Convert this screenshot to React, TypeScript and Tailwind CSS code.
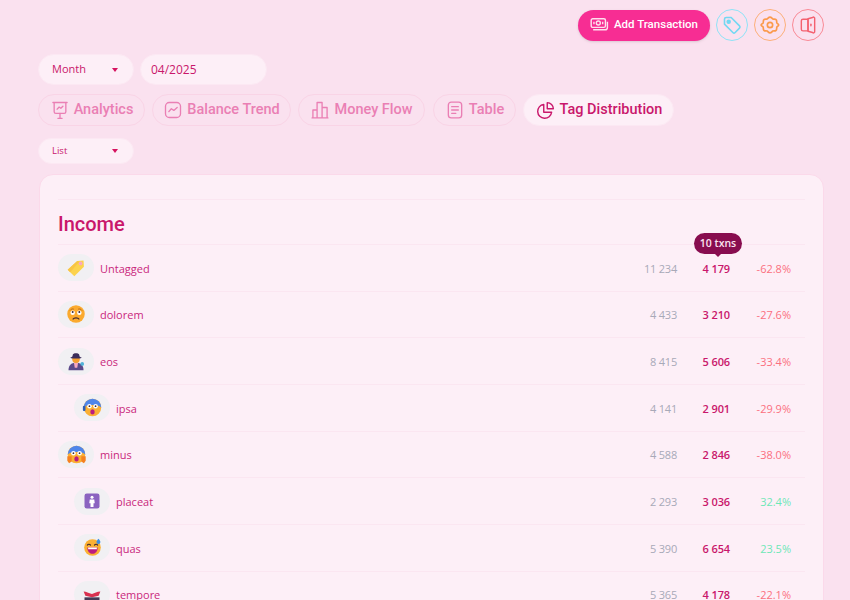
import type { ReactNode } from 'react'

const FONT = "font-['Open_Sans','Noto_Sans',sans-serif]"
const HEAD = "font-['Roboto','Open_Sans',sans-serif]"

function TabIcon({ children, className = 'w-[20px] h-[20px]' }: { children: ReactNode; className?: string }) {
  return (
    <svg viewBox="0 0 24 24" fill="none" stroke="currentColor" strokeWidth="1.6" strokeLinecap="round" strokeLinejoin="round" className={className}>
      {children}
    </svg>
  )
}

const TABS = [
  {
    label: 'Analytics', w: 'w-[107px]', mr: 'mr-[7px]',
    icon: <><path d="M3.500 3h17M5 3v11a2 2 0 0 0 2 2h10a2 2 0 0 0 2-2V3" /><path d="M12 16v5M9.500 22h5" /><path d="m8.500 11 2.500-2.500 2 1.500 2.500-2.500" /></>,
  },
  {
    label: 'Balance Trend', w: 'w-[139px]', mr: 'mr-[7px]',
    icon: <><rect x="3" y="3" width="18" height="18" rx="4.500" /><path d="m7 14 3-3.500 3 2L17 9" /></>,
  },
  {
    label: 'Money Flow', w: 'w-[127px]', mr: 'mr-[8px]',
    icon: <><path d="M2.500 21.500h19M3.500 21.500V12h5v9.500M8.500 21.500V3h6v18.500M14.500 21.500V9h6v12.500" /></>,
  },
  {
    label: 'Table', w: 'w-[83px]', mr: 'mr-[7px]',
    icon: <><rect x="4" y="2.500" width="16" height="19" rx="3.500" /><path d="M8 8h8M8 12h8M8 16h5" /></>,
  },
]

function Faces({ kind }: { kind: string }) {
  if (kind === 'tag')
    return (
      <svg viewBox="0 0 24 24" className="w-[20px] h-[20px]">
        <path d="M2 14 13.500 3.500l7.500-.5.500 7.500L10 22z" fill="#fcd34d" />
        <path d="M2 14 13.500 3.500l2.500 1L5 17z" fill="#f8c544" />
        <circle cx="17.500" cy="6.500" r="2.200" fill="#f9a8c4" />
      </svg>
    )
  if (kind === 'placeat')
    return (
      <svg viewBox="0 0 24 24" className="w-[18px] h-[18px]">
        <rect x="2" y="2" width="20" height="20" rx="3" fill="#8b63c0" />
        <circle cx="12" cy="7" r="2" fill="#fff" />
        <path d="M9 10h6l.7 5H14v5h-4v-5H8.300z" fill="#fff" />
      </svg>
    )
  if (kind === 'eos')
    return (
      <svg viewBox="0 0 24 24" className="w-[20px] h-[20px]">
        <path d="M3 23c0-6 3-9 9-9s9 3 9 9z" fill="#5b4a8a" />
        <path d="M9.500 14h5l-1 6h-3z" fill="#f7a8c0" />
        <circle cx="12" cy="10" r="4.500" fill="#f59e2e" />
        <path d="M5 8c2-1 3-1 3-3 0-3 8-3 8 0 0 2 1 2 3 3-3 1.500-11 1.500-14 0z" fill="#3b2d5a" />
        <circle cx="19.500" cy="15.500" r="2.200" fill="#4fb3d9" />
      </svg>
    )
  if (kind === 'tempore')
    return (
      <svg viewBox="0 0 24 24" className="w-[20px] h-[20px]">
        <path d="M2 9c3 0 6 2 10 3 3-1 6-3 10-3l-2 5-8 2-8-2z" fill="#d9304f" />
        <path d="M3 16h18v7H3z" fill="#453a55" />
      </svg>
    )
  const isIpsa = kind === 'ipsa'
  const isMinus = kind === 'minus'
  if (isIpsa || isMinus)
    return (
      <svg viewBox="0 0 24 24" className="w-[21px] h-[21px]">
        <circle cx="12" cy="12" r="10" fill="#fbb034" />
        <path d="M2 12a10 10 0 0 1 20 0c-2-2-4-3-10-3S4 10 2 12z" fill="#4f86ea" />
        <circle cx="8.500" cy="10.500" r="2.600" fill="#fff" />
        <circle cx="15.500" cy="10.500" r="2.600" fill="#fff" />
        <circle cx="8.500" cy="10.500" r="1" fill="#402a32" />
        <circle cx="15.500" cy="10.500" r="1" fill="#402a32" />
        <ellipse cx="12" cy="17" rx="2.500" ry="3" fill="#bb1d80" />
        {isMinus && <path d="M1.500 14h5v6l-3 2-2-3zM22.500 14h-5v6l3 2 2-3z" fill="#f5811f" />}
        {isIpsa && <rect x="1" y="10" width="3" height="6" rx="1.200" fill="#2f5fb5" />}
      </svg>
    )
  if (kind === 'quas')
    return (
      <svg viewBox="0 0 24 24" className="w-[19px] h-[19px]">
        <circle cx="12" cy="12" r="10.500" fill="#fbb034" />
        <path d="M5.500 12h13c0 5-3 8-6.500 8S5.500 17 5.500 12z" fill="#bb1d80" />
        <path d="M6.500 12h11v2.200h-11z" fill="#fff" />
        <path d="M5.500 9c1-1.500 3-1.500 4 0M14.500 9c1-1.500 3-1.500 4 0" stroke="#402a32" strokeWidth="1.500" fill="none" strokeLinecap="round" />
        <path d="M19.500 1c1.800 2 2.500 3 2.500 4.200a2.500 2.500 0 0 1-5 0C17 4 17.700 3 19.500 1z" fill="#3f8ee0" />
      </svg>
    )
  return (
    <svg viewBox="0 0 24 24" className="w-[20px] h-[20px]">
      <circle cx="12" cy="12" r="10.500" fill="#fbaa2e" />
      <circle cx="8" cy="10.500" r="2.700" fill="#fff" />
      <circle cx="16" cy="10.500" r="2.700" fill="#fff" />
      <circle cx="8" cy="9.500" r="1.200" fill="#402a32" />
      <circle cx="16" cy="9.500" r="1.200" fill="#402a32" />
      <path d="M8.500 18c1-2 6-2 7 0" stroke="#402a32" strokeWidth="1.500" fill="none" strokeLinecap="round" />
      <path d="M5 7.500c1-1.500 3-2 4-1.500M19 7.500c-1-1.500-3-2-4-1.500" stroke="#b0691b" strokeWidth="1.100" fill="none" strokeLinecap="round" />
    </svg>
  )
}

const ROWS = [
  { name: 'Untagged', icon: 'tag', prev: '11 234', cur: '4 179', pct: '-62.8%', indent: false, tip: true },
  { name: 'dolorem', icon: 'dolorem', prev: '4 433', cur: '3 210', pct: '-27.6%', indent: false },
  { name: 'eos', icon: 'eos', prev: '8 415', cur: '5 606', pct: '-33.4%', indent: false },
  { name: 'ipsa', icon: 'ipsa', prev: '4 141', cur: '2 901', pct: '-29.9%', indent: true },
  { name: 'minus', icon: 'minus', prev: '4 588', cur: '2 846', pct: '-38.0%', indent: false },
  { name: 'placeat', icon: 'placeat', prev: '2 293', cur: '3 036', pct: '32.4%', indent: true },
  { name: 'quas', icon: 'quas', prev: '5 390', cur: '6 654', pct: '23.5%', indent: true },
  { name: 'tempore', icon: 'tempore', prev: '5 365', cur: '4 178', pct: '-22.1%', indent: true },
]

function Caret() {
  return <span className="w-0 h-0 border-x-[3px] border-x-transparent border-t-[4px] border-t-[#d6125f]" />
}

function Select({ label, className, text }: { label: string; className: string; text: string }) {
  return (
    <div className={`w-[96px] flex items-center justify-between pl-[13px] pr-[15px] rounded-full bg-[#fdeff7] border border-[#fce8f3] text-[#c9176b] ${text} ${className}`}>
      {label}
      <Caret />
    </div>
  )
}

export default function App() {
  return (
    <div className={`${FONT} h-[600px] overflow-hidden bg-[#fae1ef] pl-[38px] pr-[26px]`}>
      <div className="flex justify-end items-center gap-[6px] pt-[9px]">
        <button className={`${HEAD} w-[132px] h-[31px] flex items-center justify-center gap-[5px] rounded-full bg-[#f72d93] text-white text-[11.5px] font-medium shadow-sm`}>
          <svg viewBox="0 0 24 20" fill="none" stroke="#fde0ee" strokeWidth="1.800" className="w-[19px] h-[16px]">
            <rect x="1.500" y="2" width="18" height="11" rx="2" />
            <circle cx="10.500" cy="7.500" r="2.500" />
            <path d="M5 6v3M16 6v3M4 16h15a3 3 0 0 0 3-3V6" />
          </svg>
          Add Transaction
        </button>
        <div className="w-[32px] h-[32px] flex items-center justify-center rounded-full border-[1.5px] border-[#8fe3f7] text-[#73d8f2]">
          <svg viewBox="0 0 24 24" fill="none" stroke="currentColor" strokeWidth="1.900" strokeLinejoin="round" className="w-[20px] h-[20px]">
            <path d="M3 5a2 2 0 0 1 2-2h6l10 10a2 2 0 0 1 0 2.800L15.800 21a2 2 0 0 1-2.800 0L3 11z" />
            <circle cx="8" cy="8" r="1.800" fill="currentColor" />
          </svg>
        </div>
        <div className="w-[32px] h-[32px] flex items-center justify-center rounded-full border-[1.5px] border-[#fdb07a] text-[#fb9a4b]">
          <svg viewBox="0 0 24 24" fill="none" stroke="currentColor" strokeWidth="2" strokeLinejoin="round" className="w-[20px] h-[20px]">
            <path d="M12 2.500c1.800 0 2.300 1.700 3.400 2.200 1.200.5 2.800-.3 3.900.9 1.200 1.200.4 2.700.9 3.900.5 1.100 2.200 1 2.200 2.500s-1.700 1.400-2.200 2.500c-.5 1.200.3 2.700-.9 3.900-1.100 1.200-2.700.4-3.900.9-1.100.5-1.600 2.200-3.400 2.200s-2.300-1.700-3.400-2.200c-1.200-.5-2.800.3-3.900-.9-1.200-1.200-.4-2.700-.9-3.900C3.300 13.400 1.300 13.500 1.300 12s2-1.400 2.500-2.500c.5-1.200-.3-2.700.9-3.900 1.100-1.200 2.700-.4 3.900-.9C9.700 4.200 10.200 2.500 12 2.500z" />
            <circle cx="12" cy="12" r="3.200" />
          </svg>
        </div>
        <div className="w-[32px] h-[32px] flex items-center justify-center rounded-full border-[1.5px] border-[#f98a96] text-[#f4606f]">
          <svg viewBox="0 0 24 24" fill="none" stroke="currentColor" strokeWidth="1.700" strokeLinejoin="round" strokeLinecap="round" className="w-[20px] h-[20px]">
            <path d="M12 5H6a2 2 0 0 0-2 2v10a2 2 0 0 0 2 2h6z" />
            <path d="M12 4.500 17.500 3A1.500 1.500 0 0 1 20 4.500v15a1.500 1.500 0 0 1-2.500 1.500L12 19.500z" />
            <path d="M15.500 11v2" />
          </svg>
        </div>
      </div>

      <div className="flex gap-[6px] mt-[13px]">
        <Select label="Month" className="h-[31px]" text="text-[11px]" />
        <div className="w-[127px] h-[31px] flex items-center pl-[10px] rounded-full bg-[#fdeff7] border border-[#fce8f3] text-[#c9176b] text-[12px]">04/2025</div>
      </div>

      <div className={`${HEAD} flex mt-[9px] text-[14.5px] font-medium`}>
        {TABS.map((t) => (
          <div key={t.label} className={`${t.w} ${t.mr} h-[32px] flex items-center justify-center gap-[4px] rounded-full border border-[#f9d4e6] text-[#ea7fb4]`}>
            <TabIcon>{t.icon}</TabIcon>
            {t.label}
          </div>
        ))}
        <div className="w-[151px] h-[32px] flex items-center justify-center gap-[4px] rounded-full bg-[#fdeff7] border border-[#fce8f3] text-[#c9176b]">
          <TabIcon className="w-[21px] h-[21px]">
            <path d="M10 5a8 8 0 1 0 9 9h-9z" />
            <path d="M14 3a7 7 0 0 1 7 7h-7z" />
          </TabIcon>
          Tag Distribution
        </div>
      </div>

      <Select label="List" className="h-[26px] mt-[12px]" text="text-[9.5px]" />

      <div className="mt-[10px] ml-[1px] w-[785px] h-[500px] rounded-[14px] bg-[#fdeff7] border border-[#fbd9ea] px-[18px] pt-[24px]">
        <div className="border-t border-[#fbe6f1] h-[45px] flex items-center">
          <h2 className={`${HEAD} mt-[4px] text-[20px] leading-none font-medium text-[#c9176b]`}>Income</h2>
        </div>
        {ROWS.map((r) => (
          <div key={r.name} className={`relative h-[46.67px] flex items-center border-t border-[#fbe6f1] text-[11px] ${r.indent ? 'pl-[16px]' : ''}`}>
            <div className="w-[36px] h-[27px] flex items-center justify-center rounded-full bg-[#f1f0f3]">
              <Faces kind={r.icon} />
            </div>
            <span className="ml-[6px] mt-[2px] text-[#c9287c]">{r.name}</span>
            <span className="absolute right-[128px] mt-[2px] tracking-[-0.02em] text-[#a8a9b8]">{r.prev}</span>
            <span className="absolute right-[75px] mt-[2px] font-semibold tracking-[-0.01em] text-[#c9176b]">{r.cur}</span>
            <span className={`absolute right-[14px] mt-[2px] ${r.pct.startsWith('-') ? 'text-[#fb6f80]' : 'text-[#6ee7b7]'}`}>{r.pct}</span>
            {r.tip && (
              <div className="absolute right-[63px] top-[-12px] h-[21px] w-[48px] flex items-center justify-center rounded-full bg-[#880d4f] text-[#fbe3ef] text-[10.5px] font-semibold">
                10 txns
                <span className="absolute bottom-[-3px] left-1/2 -translate-x-1/2 w-0 h-0 border-x-[3px] border-x-transparent border-t-[3px] border-t-[#880d4f]" />
              </div>
            )}
          </div>
        ))}
      </div>
    </div>
  )
}
